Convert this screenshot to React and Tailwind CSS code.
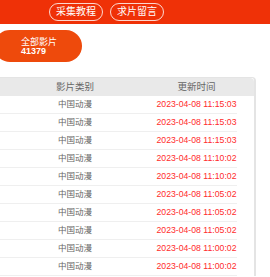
import React from "react";

const rows = [
  "2023-04-08 11:15:03",
  "2023-04-08 11:15:03",
  "2023-04-08 11:15:03",
  "2023-04-08 11:10:02",
  "2023-04-08 11:10:02",
  "2023-04-08 11:05:02",
  "2023-04-08 11:05:02",
  "2023-04-08 11:05:02",
  "2023-04-08 11:00:02",
  "2023-04-08 11:00:02",
];

const App = () => {
  return (
    <div
      className="w-[270px] h-[277px] overflow-hidden bg-white"
      style={{ fontFamily: '"Liberation Sans", "Noto Sans CJK SC", sans-serif' }}
    >
      <div className="h-[24px] bg-[#ef3107] flex items-center pl-[49px] gap-[7px]">
        <button className="w-[54px] h-[18px] rounded-full border border-white/80 text-white text-[10px] leading-none">
          采集教程
        </button>
        <button className="w-[54px] h-[18px] rounded-full border border-white/80 text-white text-[10px] leading-none">
          求片留言
        </button>
      </div>

      <div className="mt-[6px] ml-[-6px] w-[88px] h-[32px] rounded-full bg-[#ee4a0c] text-white flex flex-col justify-center pl-[27px]">
        <span className="text-[9px] leading-[10px]">全部影片</span>
        <span className="text-[9px] leading-[9px] font-bold">41379</span>
      </div>

      <div className="mt-[15px] w-[256px] border-r-2 border-t border-[#e4e4e4] rounded-tr-[4px]">
        <div className="h-[18px] bg-[#e9e9e9] rounded-tr-[4px]">
          <div className="w-[237px] h-full grid grid-cols-[150px_1fr] items-center text-[#666] text-[9.5px]">
            <span className="text-center">影片类别</span>
            <span className="text-center pl-[6px]">更新时间</span>
          </div>
        </div>
        <div className="w-[237px]">
          {rows.map((t, i) => (
            <div
              key={i}
              className="h-[18px] border-b border-[#efefef] grid grid-cols-[150px_1fr] items-center"
            >
              <span className="text-center text-[#666] text-[8.5px]">中国动漫</span>
              <span className="text-center pl-[6px] text-[#ff2b2b] text-[8.7px] whitespace-nowrap">
                {t}
              </span>
            </div>
          ))}
        </div>
      </div>
    </div>
  );
};

export default App;
